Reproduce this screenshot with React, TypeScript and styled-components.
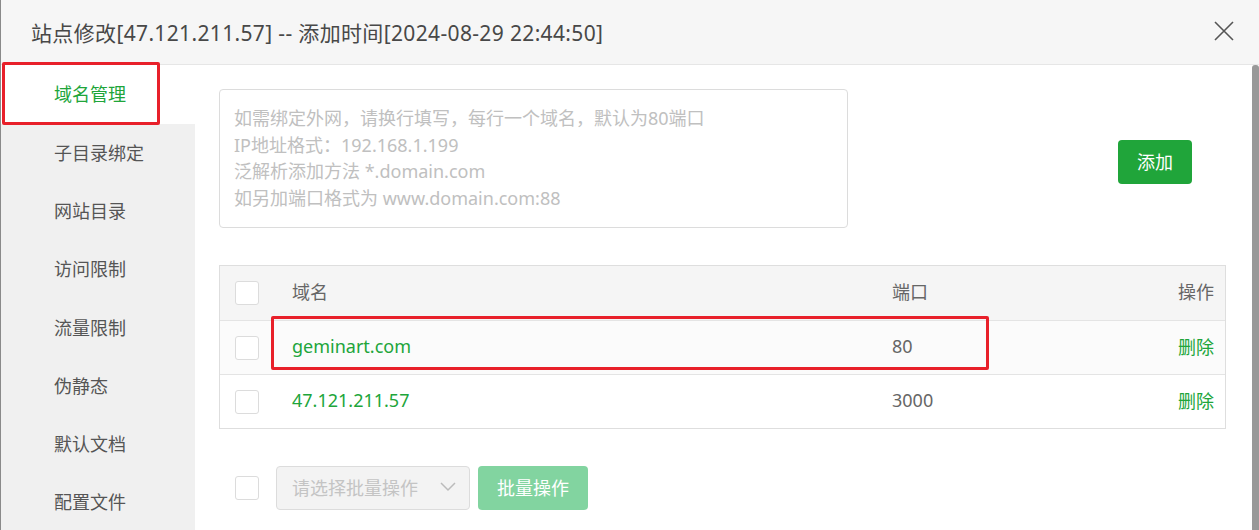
import React from "react";
import styled, { createGlobalStyle } from "styled-components";

const Global = createGlobalStyle`
  html, body { margin: 0; padding: 0; background: #fff; }
  body { font-family: "Noto Sans", "Noto Sans CJK SC", sans-serif; }
  * { box-sizing: border-box; }
`;

const green = "#20a53a";
const red = "#e8202a";

const Dialog = styled.div`
  width: 1259px;
  height: 530px;
  overflow: hidden;
  background: #fff;
  border-left: 1px solid #8a8a8a;
  display: flex;
  flex-direction: column;
`;

const Header = styled.div`
  height: 65px;
  flex: none;
  background: #f6f6f6;
  border-bottom: 1px solid #e6e6e6;
  display: flex;
  align-items: center;
  justify-content: space-between;
  padding: 0 24px 0 30px;
`;

const Title = styled.div`
  font-size: 21px;
  letter-spacing: 0.35px;
  color: #484848;
  margin-top: -1px;
`;

const Close = styled.button`
  border: none;
  background: none;
  padding: 0;
  width: 22px;
  height: 22px;
  display: flex;
  align-items: center;
  justify-content: center;
  margin-top: -2px;
`;

const Body = styled.div`
  flex: 1;
  display: flex;
  min-height: 0;
`;

const Sidebar = styled.div`
  width: 194px;
  flex: none;
  background: #f0f0f0;
  display: flex;
  flex-direction: column;
`;

const NavItem = styled.div<{ $active?: boolean; $marked?: boolean }>`
  position: relative;
  height: ${(p) => (p.$active ? "59px" : "58.3px")};
  flex: none;
  display: flex;
  align-items: center;
  padding: 0 0 3px 53px;
  font-size: 18px;
  color: ${(p) => (p.$active ? green : "#555")};
  background: ${(p) => (p.$active ? "#fff" : "transparent")};
  &::after {
    content: "";
    display: ${(p) => (p.$marked ? "block" : "none")};
    position: absolute;
    left: 1px;
    top: -3px;
    width: 152px;
    height: 57px;
    border: 3px solid ${red};
    border-radius: 2px;
  }
`;

const Content = styled.div`
  flex: 1;
  padding: 24px 26px 0 24px;
  display: flex;
  flex-direction: column;
`;

const TopRow = styled.div`
  display: flex;
  align-items: center;
`;

const TextArea = styled.div`
  width: 629px;
  height: 139px;
  border: 1px solid #dcdcdc;
  border-radius: 4px;
  padding: 15px 14px;
  font-size: 18px;
  line-height: 26.7px;
  color: #c0c0c0;
`;

const Button = styled.button<{ $disabled?: boolean }>`
  height: 44px;
  border: none;
  border-radius: 4px;
  padding: 0 0 2px;
  font-family: inherit;
  font-size: 18px;
  color: #fff;
  background: ${(p) => (p.$disabled ? "#82d4a0" : green)};
`;

const AddButton = styled(Button)`
  margin-left: auto;
  margin-right: 34px;
  margin-top: 7px;
  width: 74px;
`;

const Table = styled.div`
  margin-top: 37px;
  border: 1px solid #dedede;
  display: flex;
  flex-direction: column;
`;

const Row = styled.div<{ $bg?: string }>`
  position: relative;
  display: grid;
  grid-template-columns: 57px 600px 1fr auto;
  align-items: center;
  height: 54px;
  padding: 0 11px 0 15px;
  background: ${(p) => p.$bg || "#fff"};
  & + & {
    border-top: 1px solid #e4e4e4;
  }
  font-size: 18px;
`;

const Mark = styled.div`
  position: absolute;
  left: 51px;
  top: -5px;
  width: 718px;
  height: 54px;
  border: 3px solid ${red};
  border-radius: 2px;
  pointer-events: none;
`;

const Check = styled.span`
  display: block;
  width: 24px;
  height: 24px;
  border: 1px solid #dcdcdc;
  border-radius: 3px;
  background: #fff;
`;

const Cell = styled.span<{ $color?: string }>`
  color: ${(p) => p.$color || "#666"};
  margin-bottom: 4px;
`;

const Footer = styled.div`
  margin-top: 37px;
  padding-left: 16px;
  display: flex;
  align-items: center;
`;

const Select = styled.div`
  margin-left: 17px;
  width: 194px;
  height: 44px;
  border: 1px solid #dcdcdc;
  border-radius: 4px;
  background: #f3f3f3;
  display: flex;
  align-items: center;
  justify-content: space-between;
  padding: 0 13px 3px 15px;
  font-size: 18px;
  color: #c4c4c4;
`;

const BatchButton = styled(Button)`
  margin-left: 8px;
  width: 110px;
`;

const Scrollbar = styled.div`
  width: 7px;
  flex: none;
  background: #999;
  border-radius: 3px 3px 0 0;
`;

const navs = [
  "域名管理",
  "子目录绑定",
  "网站目录",
  "访问限制",
  "流量限制",
  "伪静态",
  "默认文档",
  "配置文件",
];

export default function App() {
  return (
    <>
      <Global />
      <Dialog>
        <Header>
          <Title>站点修改[47.121.211.57] -- 添加时间[2024-08-29 22:44:50]</Title>
          <Close aria-label="close">
            <svg width="20" height="20" viewBox="0 0 20 20">
              <path d="M1 1 L19 19 M19 1 L1 19" stroke="#555" strokeWidth="1.6" fill="none" />
            </svg>
          </Close>
        </Header>
        <Body>
          <Sidebar>
            {navs.map((n, i) => (
              <NavItem key={n} $active={i === 0} $marked={i === 0}>
                {n}
              </NavItem>
            ))}
          </Sidebar>
          <Content>
            <TopRow>
              <TextArea>
                如需绑定外网，请换行填写，每行一个域名，默认为80端口
                <br />
                IP地址格式：192.168.1.199
                <br />
                泛解析添加方法 *.domain.com
                <br />
                如另加端口格式为 www.domain.com:88
              </TextArea>
              <AddButton>添加</AddButton>
            </TopRow>
            <Table>
              <Row $bg="#f5f5f5">
                <Check />
                <Cell>域名</Cell>
                <Cell>端口</Cell>
                <Cell>操作</Cell>
              </Row>
              <Row $bg="#fbfbfb">
                <Check />
                <Cell $color={green}>geminart.com</Cell>
                <Cell>80</Cell>
                <Cell $color={green}>删除</Cell>
                <Mark />
              </Row>
              <Row>
                <Check />
                <Cell $color={green}>47.121.211.57</Cell>
                <Cell>3000</Cell>
                <Cell $color={green}>删除</Cell>
              </Row>
            </Table>
            <Footer>
              <Check />
              <Select>
                <span>请选择批量操作</span>
                <svg width="16" height="10" viewBox="0 0 16 10">
                  <path d="M1 1 L8 8 L15 1" stroke="#bbb" strokeWidth="1.5" fill="none" />
                </svg>
              </Select>
              <BatchButton $disabled>批量操作</BatchButton>
            </Footer>
          </Content>
          <Scrollbar />
        </Body>
      </Dialog>
    </>
  );
}
